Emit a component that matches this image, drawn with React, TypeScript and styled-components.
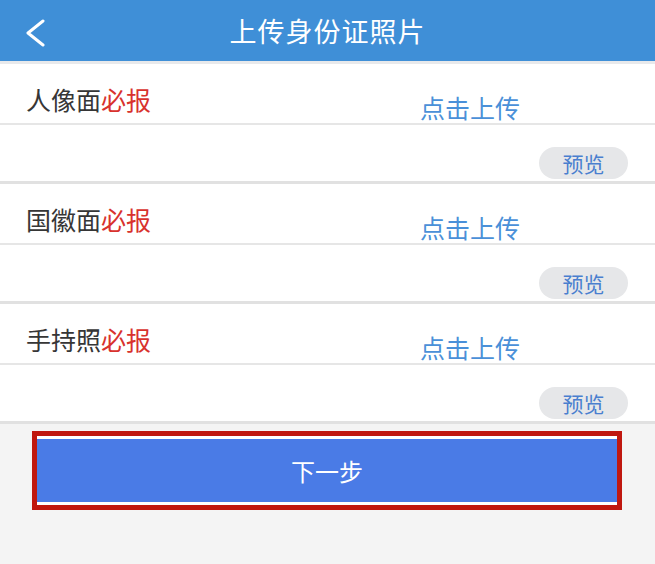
import React from 'react';
import styled, { createGlobalStyle } from 'styled-components';

const GlobalStyle = createGlobalStyle`
	html, body {
		margin: 0;
		padding: 0;
		background: #f4f4f4;
	}
	body {
		font-family: 'Noto Sans CJK SC', 'Noto Sans', sans-serif;
	}
`;

const Page = styled.div`
	width: 655px;
	height: 564px;
	background: #f4f4f4;
	display: flex;
	flex-direction: column;
	overflow: hidden;
`;

const Header = styled.header`
	height: 61px;
	background: #3f8fd7;
	border-bottom: 3px solid #e8e9eb;
	display: flex;
	align-items: center;
	position: relative;
	justify-content: center;
`;

const BackButton = styled.button`
	position: absolute;
	left: 24px;
	top: 19px;
	border: none;
	background: none;
	padding: 0;
	width: 22px;
	height: 28px;
	cursor: pointer;
`;

const Title = styled.h1`
	margin: 0;
	font-size: 27px;
	font-weight: 400;
	color: #ffffff;
	letter-spacing: 1px;
`;

const Section = styled.section`
	background: #ffffff;
	border-bottom: 3px solid #e1e1e1;
`;

const TitleRow = styled.div`
	height: 59px;
	display: flex;
	border-bottom: 2px solid #e6e6e6;
	padding-left: 26px;
	padding-right: 135px;
`;

const Label = styled.div`
	flex: 1;
	font-size: 25px;
	color: #363636;
	padding-top: 19px;
	line-height: 32px;
`;

const Required = styled.span`
	color: #d8322d;
`;

const UploadLink = styled.div`
	font-size: 25px;
	color: #4a90d8;
	padding-top: 27px;
	line-height: 32px;
	cursor: pointer;
`;

const PreviewRow = styled.div`
	height: 56px;
	display: flex;
	justify-content: flex-end;
	align-items: flex-start;
	padding-right: 27px;
`;

const PreviewButton = styled.button`
	margin-top: 22px;
	width: 89px;
	height: 32px;
	border: none;
	border-radius: 16px;
	background: #e6e7e9;
	color: #4a7fcf;
	font-family: inherit;
	font-size: 21px;
	line-height: 32px;
	padding: 0;
`;

const Footer = styled.div`
	padding: 7px 33px 0 32px;
`;

const NextButton = styled.button`
	width: 100%;
	height: 79px;
	border: 5px solid #c0170f;
	background: #ffffff;
	padding: 3px 0;
	display: block;
	cursor: pointer;
`;

const NextInner = styled.div`
	height: 100%;
	background: #4a7be6;
	display: flex;
	align-items: center;
	justify-content: center;
	color: #ffffff;
	font-family: 'Noto Sans CJK SC', sans-serif;
	font-size: 24px;
`;

const items = ['人像面', '国徽面', '手持照'];

const App: React.FC = () => {
	return (
		<>
		<GlobalStyle />
		<Page>
			<Header>
				<BackButton aria-label="返回">
					<svg width="22" height="28" viewBox="0 0 22 28">
						<polyline points="19,2 4,14 19,26" fill="none" stroke="#ffffff" strokeWidth="3" strokeLinecap="round" strokeLinejoin="round" />
					</svg>
				</BackButton>
				<Title>上传身份证照片</Title>
			</Header>
			{items.map((name) => (
				<Section key={name}>
					<TitleRow>
						<Label>{name}<Required>必报</Required></Label>
						<UploadLink>点击上传</UploadLink>
					</TitleRow>
					<PreviewRow>
						<PreviewButton>预览</PreviewButton>
					</PreviewRow>
				</Section>
			))}
			<Footer>
				<NextButton>
					<NextInner>下一步</NextInner>
				</NextButton>
			</Footer>
		</Page>
		</>
	);
};

export default App;
